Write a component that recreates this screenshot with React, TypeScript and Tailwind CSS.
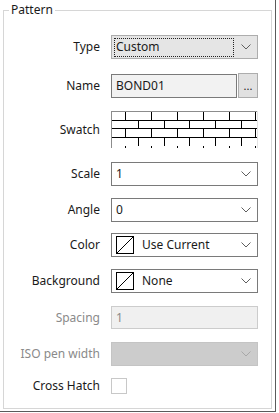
import React from "react";

const Chevron = ({ color = "#5f5f5f" }: { color?: string }) => (
  <svg width="10" height="6" viewBox="0 0 10 6" className="shrink-0">
    <polyline points="0.5,0.5 5,5 9.5,0.5" fill="none" stroke={color} strokeWidth="1" />
  </svg>
);

const ColorIcon = () => (
  <svg width="18" height="18" viewBox="0 0 18 18" className="shrink-0">
    <rect x="0.5" y="0.5" width="17" height="17" fill="white" stroke="black" />
    <line x1="1" y1="17" x2="17" y2="1" stroke="black" strokeWidth="1" />
  </svg>
);

const Row = ({
  label,
  mt,
  disabled,
  children,
}: {
  label: string;
  mt: string;
  disabled?: boolean;
  children: React.ReactNode;
}) => (
  <div className={`flex items-center ${mt}`}>
    <div
      className={`w-[96px] text-right leading-none whitespace-nowrap ${
        disabled ? "text-[#8a8a8a]" : "text-[#1a1a1a]"
      }`}
    >
      {label}
    </div>
    <div className="ml-[11px]">{children}</div>
  </div>
);

const Combo = ({ children }: { children: React.ReactNode }) => (
  <div className="w-[147px] h-[24px] border border-[#7a7a7a] bg-white flex items-center pl-[4px] pr-[6px]">
    <div className="flex-1 flex items-center gap-[8px]">{children}</div>
    <Chevron />
  </div>
);

const Brick = () => {
  const rowH = 8.7;
  const lines: React.ReactNode[] = [];
  for (let i = 1; i <= 3; i++) {
    const y = Math.round(i * rowH) + 0.5;
    lines.push(<line key={"h" + i} x1="0" y1={y} x2="147" y2={y} stroke="black" />);
  }
  const rowA = [14, 40, 66, 92, 118, 144];
  const rowB = [27, 53, 78, 104, 130];
  for (let r = 0; r < 5; r++) {
    const y1 = Math.round(r * rowH);
    const y2 = Math.round((r + 1) * rowH);
    const xs = r % 2 === 0 ? rowA : rowB;
    xs.forEach((x, j) =>
      lines.push(
        <line key={`v${r}-${j}`} x1={x + 0.5} y1={y1} x2={x + 0.5} y2={y2} stroke="black" />
      )
    );
  }
  return (
    <svg width="147" height="37" viewBox="0 0 147 37" className="block">
      <rect x="0" y="0" width="147" height="37" fill="white" />
      {lines}
      <line x1="0" y1="0.5" x2="147" y2="0.5" stroke="#8c8c8c" />
      <line x1="0.5" y1="0" x2="0.5" y2="37" stroke="#8c8c8c" />
      <line x1="146.5" y1="0" x2="146.5" y2="37" stroke="#e3e3e3" />
    </svg>
  );
};

export default function App() {
  return (
    <div className="w-[279px] h-[413px] bg-white font-['Noto_Sans',sans-serif] text-[12px] text-[#1a1a1a]">
      <div className="w-[276px] h-[412px] border-r border-b border-[#5a5a5a] pt-[10px] pl-[3px]">
        <div className="relative w-[269px] h-[399px] border border-[#d6d6d6]">
          <div className="absolute left-[5px] top-[-9px] bg-white px-[2px] leading-[16px] text-[#1a1a1a]">
            Pattern
          </div>
          <div className="flex flex-col">
            <Row label="Type" mt="mt-[24px]">
              <div className="w-[147px] h-[24px] border border-[#adadad] bg-[#e5e5e5] flex items-center pl-[2px] pr-[6px]">
                <div className="w-[120px] h-[19px] border border-dotted border-[#222] flex items-center pl-[1px] leading-none">
                  Custom
                </div>
                <div className="flex-1" />
                <Chevron />
              </div>
            </Row>
            <Row label="Name" mt="mt-[14px]">
              <div className="flex items-center gap-[1px]">
                <div className="w-[126px] h-[24px] border border-[#7a7a7a] bg-[#f2f2f2] flex items-center pl-[4px] leading-none">
                  BOND01
                </div>
                <div className="w-[20px] h-[25px] border border-[#adadad] bg-[#e1e1e1] flex items-end justify-center pb-[6px] leading-none text-[11px]">
                  ...
                </div>
              </div>
            </Row>
            <Row label="Swatch" mt="mt-[13px]">
              <Brick />
            </Row>
            <Row label="Scale" mt="mt-[14px]">
              <Combo>
                <span className="leading-none">1</span>
              </Combo>
            </Row>
            <Row label="Angle" mt="mt-[12px]">
              <Combo>
                <span className="leading-none">0</span>
              </Combo>
            </Row>
            <Row label="Color" mt="mt-[11px]">
              <Combo>
                <ColorIcon />
                <span className="leading-none">Use Current</span>
              </Combo>
            </Row>
            <Row label="Background" mt="mt-[12px]">
              <Combo>
                <ColorIcon />
                <span className="leading-none">None</span>
              </Combo>
            </Row>
            <Row label="Spacing" mt="mt-[13px]" disabled>
              <div className="w-[147px] h-[23px] border border-[#cccccc] bg-[#f0f0f0] flex items-center pl-[4px] leading-none text-[#8a8a8a]">
                1
              </div>
            </Row>
            <Row label="ISO pen width" mt="mt-[13px]" disabled>
              <div className="w-[147px] h-[24px] border border-[#c4c4c4] bg-[#cccccc] flex items-center justify-end pr-[6px]">
                <Chevron color="#a8a8a8" />
              </div>
            </Row>
            <Row label="Cross Hatch" mt="mt-[12px]">
              <div className="w-[16px] h-[16px] border border-[#c8c8c8] bg-white" />
            </Row>
          </div>
        </div>
      </div>
    </div>
  );
}
